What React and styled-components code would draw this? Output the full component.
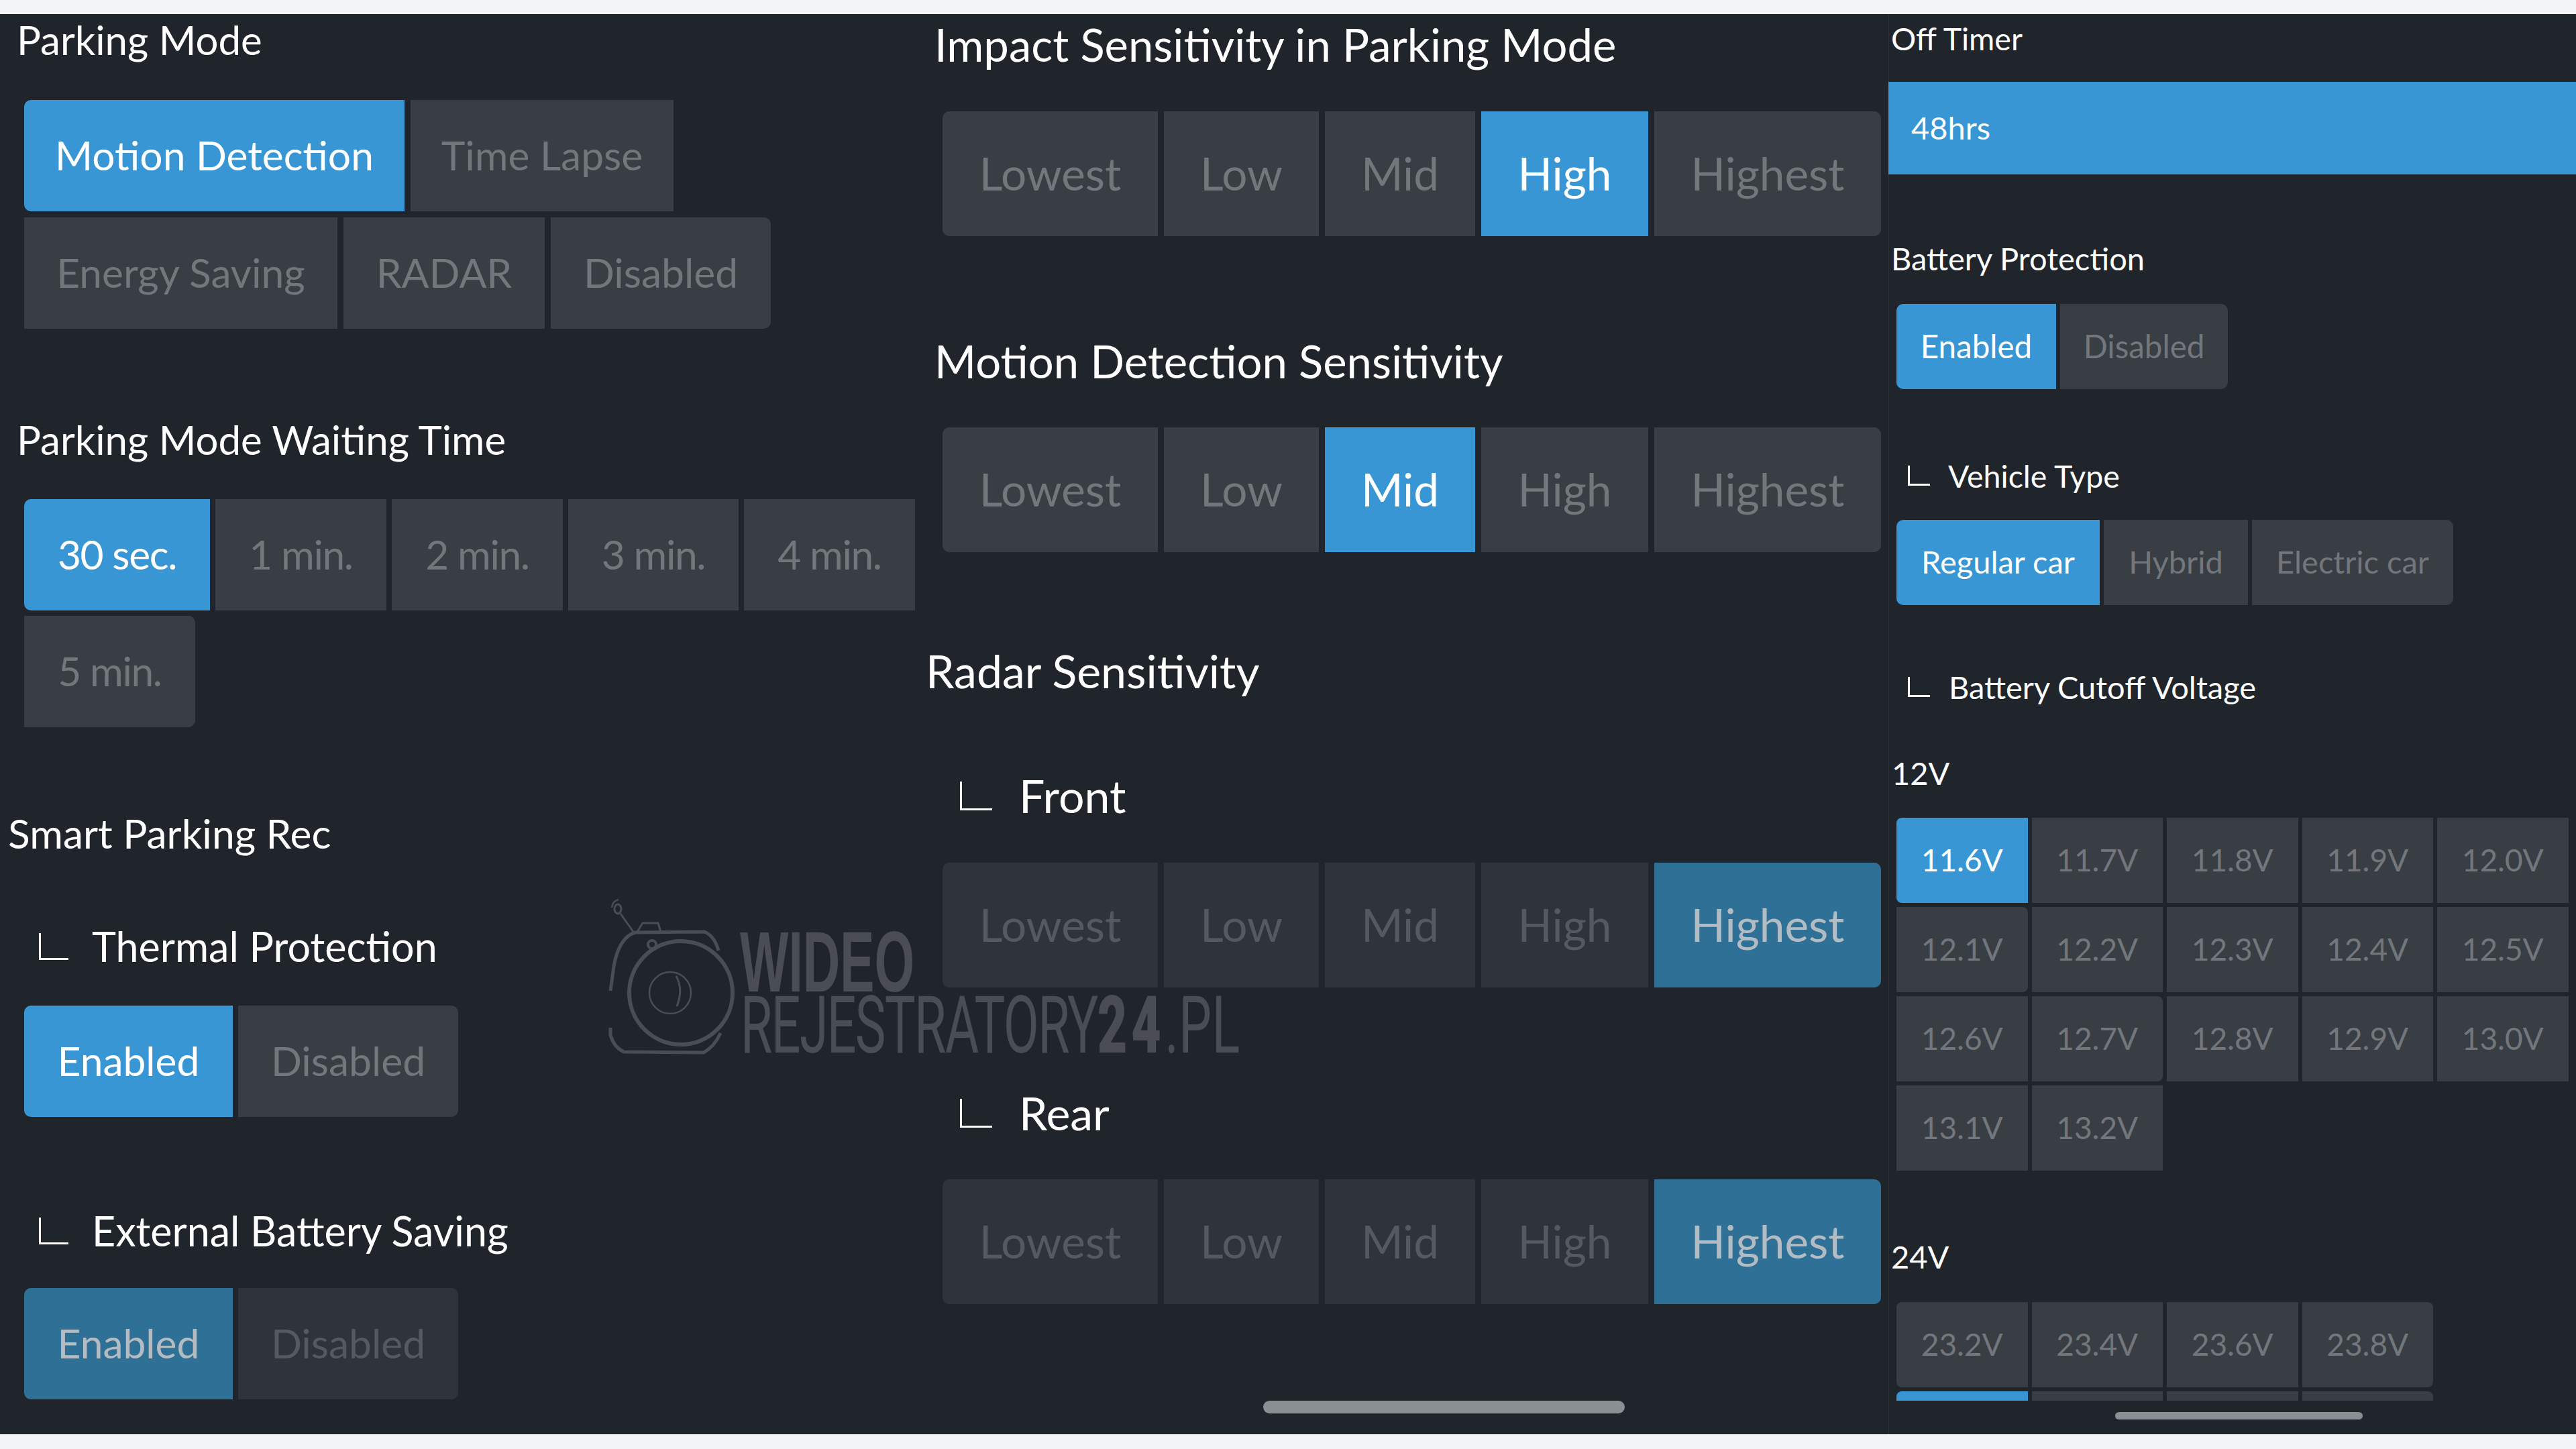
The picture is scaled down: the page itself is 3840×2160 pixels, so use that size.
import React from 'react'
import styled, { createGlobalStyle } from 'styled-components'

const GlobalStyle = createGlobalStyle`
  html, body {
    margin: 0;
    padding: 0;
    background: #f3f4f6;
  }
  body {
    font-family: Lato, "Noto Sans", sans-serif;
  }
`

const Screen = styled.div`
  position: relative;
  width: 3840px;
  height: 2160px;
  padding: 21px 0 22px;
  box-sizing: border-box;
  overflow: hidden;
`

const Panels = styled.div`
  display: flex;
  height: 2117px;
  background: #20242b;
`

const LeftCol = styled.div`
  width: 1380px;
  flex: none;
`

const MidCol = styled.div`
  width: 1435px;
  flex: none;
  position: relative;
`

const RightCol = styled.div`
  flex: 1;
  position: relative;
  border-left: 1px solid #2c3037;
  box-sizing: border-box;
`

const Heading = styled.div`
  color: #fff;
  font-size: ${p => p.$size}px;
  line-height: ${p => Math.round(p.$size * 1.2)}px;
  margin-top: ${p => p.$top}px;
  padding-left: ${p => p.$left}px;
  white-space: nowrap;
  display: flex;
  align-items: center;
`

const Corner = styled.svg`
  flex: none;
  margin-right: ${p => p.$gap}px;
  fill: none;
  stroke: #fff;
  stroke-width: 3;
`

const Row = styled.div`
  display: flex;
  flex-wrap: wrap;
  gap: ${p => p.$gap}px;
  margin-top: ${p => p.$top}px;
  margin-left: ${p => p.$left}px;
  width: ${p => p.$width}px;
`

const Btn = styled.div`
  flex: none;
  height: ${p => p.$h}px;
  width: ${p => p.$w}px;
  padding-bottom: 3px;
  display: flex;
  align-items: center;
  justify-content: center;
  font-size: ${p => p.$size}px;
  letter-spacing: ${p => p.$track || 0}px;
  white-space: nowrap;
  box-sizing: border-box;
  border-radius: ${p => p.$radius};
  background: ${p => p.$on ? (p.$dim ? '#2f7096' : '#3996d5') : (p.$dim ? '#2f343b' : '#393e45')};
  color: ${p => p.$on ? (p.$dim ? '#b3bcc2' : '#fff') : (p.$dim ? '#565a60' : '#73777c')};
`

const VoltGrid = styled.div`
  display: grid;
  grid-template-columns: repeat(${p => p.$columns}, 195.5px);
  grid-auto-rows: 127px;
  column-gap: 6px;
  row-gap: 6px;
  margin-top: ${p => p.$top}px;
  margin-left: 11px;
`

const Clip = styled.div`
  height: 147px;
  overflow: hidden;
  margin-top: ${p => p.$top}px;
`

const OffBar = styled.div`
  height: 138px;
  margin-top: 37px;
  margin-left: -1px;
  padding-bottom: 3px;
  box-sizing: border-box;
  background: #3996d5;
  color: #fff;
  font-size: 47px;
  display: flex;
  align-items: center;
  padding-left: 34px;
`

const ScrollThumb = styled.div`
  position: absolute;
  left: ${p => p.$left}px;
  top: ${p => p.$top}px;
  width: ${p => p.$width}px;
  height: ${p => p.$height}px;
  border-radius: 10px;
  background: #8b8e92;
`

const Watermark = styled.div`
  position: absolute;
  left: 905px;
  top: 1335px;
  width: 960px;
  height: 245px;
  pointer-events: none;
`

const MarkIcon = styled.svg`
  position: absolute;
  left: 0;
  top: 0;
  fill: none;
  stroke: #4a4e54;
`

const MarkTop = styled.div`
  position: absolute;
  left: 198px;
  top: 51px;
  font-family: "Liberation Sans", sans-serif;
  font-weight: 700;
  font-size: 128px;
  line-height: 96px;
  color: #4a4e54;
  transform: scaleX(0.6);
  transform-origin: left top;
  white-space: nowrap;
`

const MarkBottom = styled.div`
  position: absolute;
  left: 199px;
  top: 149px;
  font-family: "Roboto", sans-serif;
  font-weight: 400;
  font-size: 118px;
  line-height: 90px;
  letter-spacing: -2.5px;
  color: #4a4e54;
  transform: scaleX(0.652);
  transform-origin: left top;
  white-space: nowrap;
  b {
    font-weight: 900;
    letter-spacing: 9px;
  }
  span {
    letter-spacing: 1px;
  }
`

const L = 10

function radiusFor(i, count) {
  if (i === 0) return `${L}px 0 0 ${L}px`
  if (i === count - 1) return `0 ${L}px ${L}px 0`
  return '0'
}

function ButtonGroup({ items, active, dim, size, h, gap, top, left, width, track }) {
  return (
    <Row $gap={gap} $top={top} $left={left} $width={width}>
      {items.map(([label, w], i) => (
        <Btn key={label} $w={w} $h={h} $size={size} $track={track} $on={i === active} $dim={dim}
          $radius={radiusFor(i, items.length)}>
          {label}
        </Btn>
      ))}
    </Row>
  )
}

const levels = [['Lowest', 321], ['Low', 231], ['Mid', 224], ['High', 249], ['Highest', 338]]

function Sensitivity({ active, dim, top }) {
  return <ButtonGroup items={levels} active={active} dim={dim} size={67.5} h={186} gap={9} top={top} left={25} width={1410} />
}

function SubHeading({ children, size, top, left, icon = [44, 40], gap }) {
  return (
    <Heading $size={size} $top={top} $left={left}>
      <Corner $gap={gap} width={icon[0]} height={icon[1]}>
        <path d={`M1.5 0V${icon[1] - 1.5}H${icon[0]}`} />
      </Corner>
      {children}
    </Heading>
  )
}

function Volts({ items, active, top, columns = 5, rightRounded = [] }) {
  return (
    <VoltGrid $top={top} $columns={columns}>
      {items.map((v, i) => {
        let radius = '0'
        if (i === 0 || (columns === 4 && i % 4 === 0)) radius = '8px 0 0 8px'
        if (rightRounded.includes(i)) radius = '0 8px 8px 0'
        return (
          <Btn key={i} $h={127} $size={46} $on={i === active} $radius={radius}>{v}</Btn>
        )
      })}
    </VoltGrid>
  )
}

const volts12 = ['11.6V', '11.7V', '11.8V', '11.9V', '12.0V', '12.1V', '12.2V', '12.3V', '12.4V', '12.5V', '12.6V', '12.7V', '12.8V', '12.9V', '13.0V', '13.1V', '13.2V']
// second row of the 24V grid is scrolled out of view, only its top edge shows
const volts24 = ['23.2V', '23.4V', '23.6V', '23.8V', '', '', '', '']

function LogoMark() {
  return (
    <Watermark>
      <MarkIcon width="190" height="240">
        <path d="M5 142 L10 105 Q18 62 42 55 L145 54 Q160 60 166 82" strokeWidth="5" />
        <path d="M5 197 L5 208 Q10 226 25 233 L144 234 Q160 225 169 205" strokeWidth="5" />
        <path d="M39 54 L20 27" strokeWidth="3" />
        <ellipse cx="16" cy="20" rx="5" ry="7" strokeWidth="3" />
        <path d="M7 18 Q8 8 17 6" strokeWidth="2.5" />
        <path d="M45 54 L53 41 H76 L80 54" strokeWidth="3" />
        <circle cx="67" cy="73" r="6" strokeWidth="4" />
        <circle cx="110" cy="145" r="77" strokeWidth="6" />
        <circle cx="94" cy="145" r="31" strokeWidth="2.5" />
        <path d="M103 120 Q114 140 104 165" strokeWidth="3" />
      </MarkIcon>
      <MarkTop>WIDEO</MarkTop>
      <MarkBottom>REJESTRATORY<b>24</b><span>.PL</span></MarkBottom>
    </Watermark>
  )
}

export default function App() {
  return (
    <Screen>
      <GlobalStyle />
      <Panels>
        <LeftCol>
          <Heading $size={60} $top={2} $left={25}>Parking Mode</Heading>
          <ButtonGroup size={60.5} h={166} gap={9} top={54} left={36} width={1340} active={0}
            items={[['Motion Detection', 567], ['Time Lapse', 392], ['Energy Saving', 467], ['RADAR', 300], ['Disabled', 328]]} />
          <Heading $size={60} $top={129} $left={25}>Parking Mode Waiting Time</Heading>
          <ButtonGroup size={60.5} track={-1.4} h={166} gap={8} top={53} left={36} width={1340} active={0}
            items={[['30 sec.', 277], ['1 min.', 255], ['2 min.', 255], ['3 min.', 254], ['4 min.', 255], ['5 min.', 255]]} />
          <Heading $size={60.5} $top={121} $left={12}>Smart Parking Rec</Heading>
          <SubHeading size={61} top={96} left={58} gap={35}>Thermal Protection</SubHeading>
          <ButtonGroup size={60.5} h={166} gap={8} top={52} left={36} width={1340} active={0}
            items={[['Enabled', 311], ['Disabled', 328]]} />
          <SubHeading size={61} top={133} left={58} gap={35}>External Battery Saving</SubHeading>
          <ButtonGroup size={60.5} h={166} gap={8} top={49} left={36} width={1340} active={0} dim
            items={[['Enabled', 311], ['Disabled', 328]]} />
        </LeftCol>
        <MidCol>
          <Heading $size={67} $top={5} $left={13}>Impact Sensitivity in Parking Mode</Heading>
          <Sensitivity active={3} top={60} />
          <Heading $size={67} $top={146} $left={13}>Motion Detection Sensitivity</Heading>
          <Sensitivity active={2} top={59} />
          <Heading $size={68} $top={136} $left={0}>Radar Sensitivity</Heading>
          <SubHeading size={68} top={104} left={51} gap={40} icon={[48, 43]}>Front</SubHeading>
          <Sensitivity active={4} dim top={59} />
          <SubHeading size={68} top={146} left={51} gap={40} icon={[48, 43]}>Rear</SubHeading>
          <Sensitivity active={4} dim top={58} />
          <ScrollThumb $left={503} $top={2067} $width={539} $height={19} />
        </MidCol>
        <RightCol>
          <Heading $size={46.5} $top={8} $left={3}>Off Timer</Heading>
          <OffBar>48hrs</OffBar>
          <Heading $size={47} $top={97} $left={3}>Battery Protection</Heading>
          <ButtonGroup size={47.5} h={127} gap={6} top={40} left={11} width={1000} active={0}
            items={[['Enabled', 238], ['Disabled', 250]]} />
          <SubHeading size={46.5} top={101} left={28} gap={27} icon={[33, 30]}>Vehicle Type</SubHeading>
          <ButtonGroup size={47} h={127} gap={6} top={38} left={11} width={1000} active={0}
            items={[['Regular car', 303], ['Hybrid', 215], ['Electric car', 300]]} />
          <SubHeading size={47} top={94} left={28} gap={28} icon={[33, 30]}>Battery Cutoff Voltage</SubHeading>
          <Heading $size={47} $top={72} $left={4}>12V</Heading>
          <Volts items={volts12} active={0} top={39} rightRounded={[5, 11]} />
          <Heading $size={47} $top={100} $left={3}>24V</Heading>
          <Clip $top={40}>
            <Volts items={volts24} active={4} top={0} columns={4} rightRounded={[3, 7]} />
          </Clip>
          <ScrollThumb $left={337} $top={2084} $width={369} $height={11} />
        </RightCol>
      </Panels>
      <LogoMark />
    </Screen>
  )
}
